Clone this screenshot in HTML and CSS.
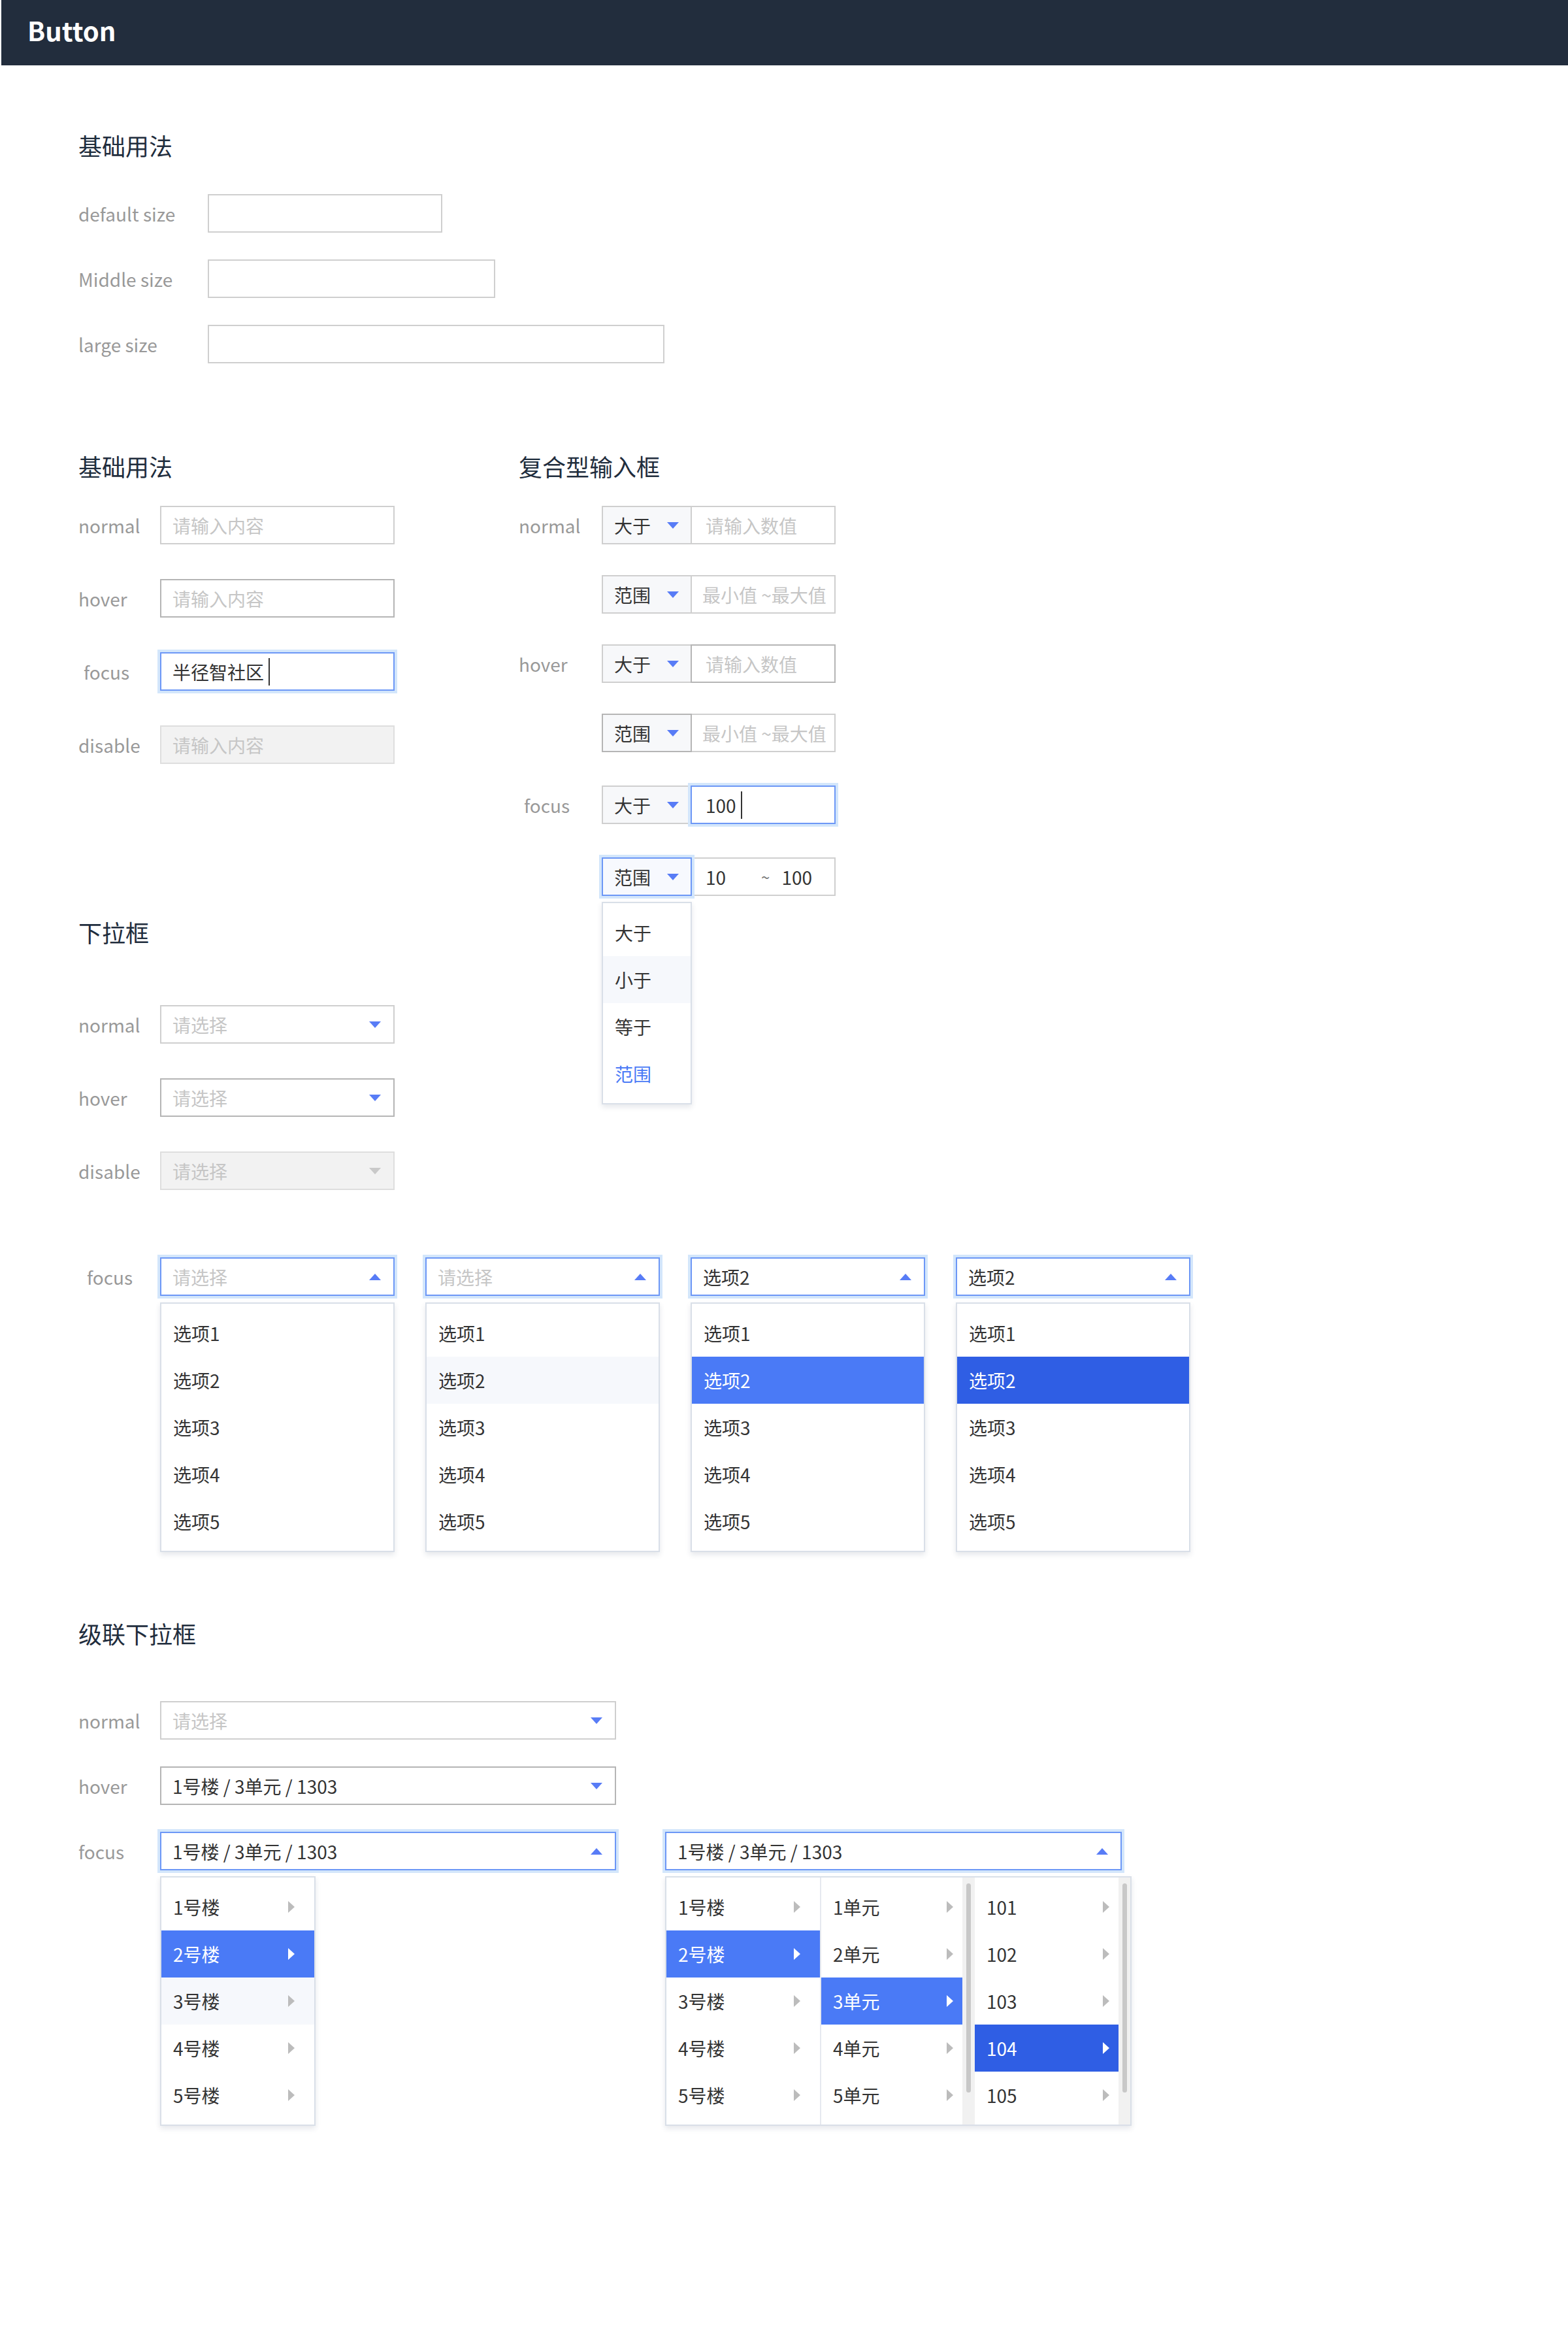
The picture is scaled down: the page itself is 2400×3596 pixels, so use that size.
FILE: index.html
```html
<!DOCTYPE html>
<html lang="zh-CN">
<head>
  <meta charset="UTF-8">
  <meta name="viewport" content="width=device-width, initial-scale=1.0">
  <title>Button</title>
  <link rel="stylesheet" href="styles.css">
</head>
<body>
  <header class="topbar">
    <h1>Button</h1>
  </header>

  <main class="page">
    <!-- input sizes -->
    <section class="sizes">
      <h2 class="block-title">基础用法</h2>
      <div class="stack">
        <div class="form-row">
          <span class="row-label">default size</span>
          <div class="field w-default"></div>
        </div>
        <div class="form-row">
          <span class="row-label">Middle size</span>
          <div class="field w-middle"></div>
        </div>
        <div class="form-row">
          <span class="row-label">large size</span>
          <div class="field w-large"></div>
        </div>
      </div>
    </section>

    <section class="split">
      <div class="split-left">
        <h2 class="block-title">基础用法</h2>
        <div class="stack">
          <div class="form-row">
            <span class="row-label">normal</span>
            <div class="field w-base"><span class="placeholder">请输入内容</span></div>
          </div>
          <div class="form-row">
            <span class="row-label">hover</span>
            <div class="field w-base is-hover"><span class="placeholder">请输入内容</span></div>
          </div>
          <div class="form-row">
            <span class="row-label is-nudged">focus</span>
            <div class="field w-base is-focus">半径智社区<span class="caret"></span></div>
          </div>
          <div class="form-row">
            <span class="row-label">disable</span>
            <div class="field w-base is-disabled"><span class="placeholder">请输入内容</span></div>
          </div>
        </div>
      </div>

      <div class="split-right">
        <h2 class="block-title">复合型输入框</h2>
        <div class="combo-list">
          <div class="combo-group">
            <span class="row-label">normal</span>
            <div class="combo-stack">
              <div class="combo">
                <div class="combo-select">大于<span class="arrow"></span></div>
                <div class="combo-input"><span class="placeholder">请输入数值</span></div>
              </div>
              <div class="combo">
                <div class="combo-select">范围<span class="arrow"></span></div>
                <div class="combo-input is-range"><span class="placeholder">最小值 ~最大值</span></div>
              </div>
            </div>
          </div>

          <div class="combo-group">
            <span class="row-label">hover</span>
            <div class="combo-stack">
              <div class="combo">
                <div class="combo-select">大于<span class="arrow"></span></div>
                <div class="combo-input is-hover"><span class="placeholder">请输入数值</span></div>
              </div>
              <div class="combo">
                <div class="combo-select is-hover">范围<span class="arrow"></span></div>
                <div class="combo-input is-range"><span class="placeholder">最小值 ~最大值</span></div>
              </div>
            </div>
          </div>

          <div class="combo-group group-focus">
            <span class="row-label is-nudged">focus</span>
            <div class="combo-stack">
              <div class="combo">
                <div class="combo-select">大于<span class="arrow"></span></div>
                <div class="combo-input is-focus">100<span class="caret"></span></div>
              </div>
              <div class="combo">
                <div class="combo-select is-focus">范围<span class="arrow"></span>
                  <div class="menu combo-menu">
                    <div class="menu-item">大于</div>
                    <div class="menu-item is-hover">小于</div>
                    <div class="menu-item">等于</div>
                    <div class="menu-item is-chosen">范围</div>
                  </div>
                </div>
                <div class="combo-input"><span>10</span><span class="tilde">~</span><span class="range-max">100</span></div>
              </div>
            </div>
          </div>
        </div>
      </div>
    </section>

    <!-- select -->
    <section class="dropdowns">
      <h2 class="block-title">下拉框</h2>
      <div class="stack">
        <div class="form-row">
          <span class="row-label">normal</span>
          <div class="field w-base"><span class="placeholder">请选择</span><span class="arrow"></span></div>
        </div>
        <div class="form-row">
          <span class="row-label">hover</span>
          <div class="field w-base is-hover"><span class="placeholder">请选择</span><span class="arrow"></span></div>
        </div>
        <div class="form-row">
          <span class="row-label">disable</span>
          <div class="field w-base is-disabled"><span class="placeholder">请选择</span><span class="arrow arrow-muted"></span></div>
        </div>
      </div>

      <div class="form-row row-open">
        <span class="row-label is-nudged">focus</span>
        <div class="select-set">
          <div class="select-group">
            <div class="field w-base is-focus"><span class="placeholder">请选择</span><span class="arrow arrow-up"></span></div>
            <div class="menu">
              <div class="menu-item">选项1</div>
              <div class="menu-item">选项2</div>
              <div class="menu-item">选项3</div>
              <div class="menu-item">选项4</div>
              <div class="menu-item">选项5</div>
            </div>
          </div>
          <div class="select-group">
            <div class="field w-base is-focus"><span class="placeholder">请选择</span><span class="arrow arrow-up"></span></div>
            <div class="menu">
              <div class="menu-item">选项1</div>
              <div class="menu-item is-hover">选项2</div>
              <div class="menu-item">选项3</div>
              <div class="menu-item">选项4</div>
              <div class="menu-item">选项5</div>
            </div>
          </div>
          <div class="select-group">
            <div class="field w-base is-focus">选项2<span class="arrow arrow-up"></span></div>
            <div class="menu">
              <div class="menu-item">选项1</div>
              <div class="menu-item is-active">选项2</div>
              <div class="menu-item">选项3</div>
              <div class="menu-item">选项4</div>
              <div class="menu-item">选项5</div>
            </div>
          </div>
          <div class="select-group">
            <div class="field w-base is-focus">选项2<span class="arrow arrow-up"></span></div>
            <div class="menu">
              <div class="menu-item">选项1</div>
              <div class="menu-item is-pressed">选项2</div>
              <div class="menu-item">选项3</div>
              <div class="menu-item">选项4</div>
              <div class="menu-item">选项5</div>
            </div>
          </div>
        </div>
      </div>
    </section>

    <!-- cascader -->
    <section class="cascades">
      <h2 class="block-title">级联下拉框</h2>
      <div class="stack">
        <div class="form-row">
          <span class="row-label">normal</span>
          <div class="field w-cascade"><span class="placeholder">请选择</span><span class="arrow"></span></div>
        </div>
        <div class="form-row">
          <span class="row-label">hover</span>
          <div class="field w-cascade is-hover">1号楼 / 3单元 / 1303<span class="arrow"></span></div>
        </div>
        <div class="form-row row-top">
          <span class="row-label">focus</span>
          <div class="cascade-set">
            <div class="cascade-group">
              <div class="field w-cascade is-focus">1号楼 / 3单元 / 1303<span class="arrow arrow-up"></span></div>
              <div class="cascade-menu">
                <div class="cascade-col col-first col-solo">
                  <div class="cascade-item">1号楼<span class="arrow-right"></span></div>
                  <div class="cascade-item is-active">2号楼<span class="arrow-right"></span></div>
                  <div class="cascade-item is-hover">3号楼<span class="arrow-right"></span></div>
                  <div class="cascade-item">4号楼<span class="arrow-right"></span></div>
                  <div class="cascade-item">5号楼<span class="arrow-right"></span></div>
                </div>
              </div>
            </div>

            <div class="cascade-group">
              <div class="field w-cascade-wide is-focus">1号楼 / 3单元 / 1303<span class="arrow arrow-up"></span></div>
              <div class="cascade-menu">
                <div class="cascade-col col-first">
                  <div class="cascade-item">1号楼<span class="arrow-right"></span></div>
                  <div class="cascade-item is-active">2号楼<span class="arrow-right"></span></div>
                  <div class="cascade-item">3号楼<span class="arrow-right"></span></div>
                  <div class="cascade-item">4号楼<span class="arrow-right"></span></div>
                  <div class="cascade-item">5号楼<span class="arrow-right"></span></div>
                </div>
                <div class="cascade-col col-unit">
                  <div class="cascade-item">1单元<span class="arrow-right"></span></div>
                  <div class="cascade-item">2单元<span class="arrow-right"></span></div>
                  <div class="cascade-item is-active">3单元<span class="arrow-right"></span></div>
                  <div class="cascade-item">4单元<span class="arrow-right"></span></div>
                  <div class="cascade-item">5单元<span class="arrow-right"></span></div>
                </div>
                <div class="scrollbar"><span class="thumb"></span></div>
                <div class="cascade-col col-room">
                  <div class="cascade-item">101<span class="arrow-right"></span></div>
                  <div class="cascade-item">102<span class="arrow-right"></span></div>
                  <div class="cascade-item">103<span class="arrow-right"></span></div>
                  <div class="cascade-item is-pressed">104<span class="arrow-right"></span></div>
                  <div class="cascade-item">105<span class="arrow-right"></span></div>
                </div>
                <div class="scrollbar scrollbar-end"><span class="thumb"></span></div>
              </div>
            </div>
          </div>
        </div>
      </div>
    </section>
  </main>
</body>
</html>
```

FILE: styles.css
```css
* {
  box-sizing: border-box;
}

body {
  margin: 0;
  background: #fff;
  font-family: "Noto Sans CJK SC", "Noto Sans", sans-serif;
  color: #333;
}

.topbar {
  height: 100px;
  margin-left: 2px;
  padding-left: 40px;
  background: #222d3d;
}

.topbar h1 {
  margin: 0;
  font-size: 40px;
  line-height: 92px;
  font-weight: 700;
  color: #fff;
}

.page {
  padding: 0 0 300px 120px;
}

.block-title {
  margin: 0;
  font-size: 36px;
  line-height: 48px;
  font-weight: 400;
  color: #1f2d3d;
}

.stack {
  display: flex;
  flex-direction: column;
}

.form-row {
  display: flex;
  align-items: center;
}

.row-label {
  flex: none;
  width: 125px;
  height: 59px;
  display: flex;
  align-items: center;
  font-size: 28px;
  color: #999;
}

.row-label.is-nudged {
  padding-left: 8px;
}

/* fields */
.field {
  flex: none;
  height: 59px;
  display: flex;
  align-items: center;
  padding: 0 19px 0 17px;
  border: 2px solid #cfcfcf;
  background: #fff;
  font-size: 28px;
  color: #333;
  white-space: nowrap;
}

.field.is-hover {
  border-color: #b5b5b5;
}

.field.is-focus {
  border-color: #6c97f6;
  box-shadow: 0 0 0 4px #d3e6fb;
}

.field.is-disabled {
  background: #f2f2f2;
  border-color: #dedede;
}

.placeholder {
  color: #c6c6c6;
}

.caret {
  display: inline-block;
  width: 2px;
  height: 42px;
  margin-left: 7px;
  background: #333;
}

.w-default { width: 359px; }
.w-middle { width: 440px; }
.w-large { width: 699px; }
.w-base { width: 359px; }
.w-cascade { width: 698px; }
.w-cascade-wide { width: 699px; }

.arrow {
  margin-left: auto;
  width: 0;
  height: 0;
  border-left: 9px solid transparent;
  border-right: 9px solid transparent;
  border-top: 10px solid #587cf6;
}

.arrow-up {
  border-top: 0;
  border-bottom: 10px solid #587cf6;
}

.arrow-muted {
  border-top-color: #c9c9c9;
}

.arrow-right {
  flex: none;
  width: 0;
  height: 0;
  border-top: 9px solid transparent;
  border-bottom: 9px solid transparent;
  border-left: 10px solid #bcbcbc;
}

/* sizes */
.sizes {
  padding-top: 98px;
}

.sizes .stack {
  margin-top: 51px;
  gap: 41px;
}

.sizes .row-label {
  width: 198px;
}

/* two columns */
.split {
  display: flex;
  margin-top: 133px;
}

.split-left {
  width: 674px;
  flex: none;
}

.split-left .stack {
  margin-top: 37px;
  gap: 53px;
}

.combo-list {
  margin-top: 37px;
  display: flex;
  flex-direction: column;
  gap: 47px;
}

.combo-group {
  display: flex;
  align-items: flex-start;
}

.combo-group .row-label {
  width: 127px;
}

.combo-stack {
  display: flex;
  flex-direction: column;
  gap: 47px;
}

.group-focus {
  margin-top: 4px;
}

.group-focus .combo-stack {
  gap: 51px;
}

.combo {
  display: flex;
  font-size: 28px;
}

.combo-select {
  position: relative;
  width: 138px;
  height: 59px;
  display: flex;
  align-items: center;
  padding: 0 18px 0 17px;
  border: 2px solid #cfcfcf;
  background: #f7f8fa;
  color: #333;
}

.combo-input {
  width: 222px;
  height: 59px;
  margin-left: -2px;
  display: flex;
  align-items: center;
  padding: 0 10px 0 21px;
  border: 2px solid #cfcfcf;
  background: #fff;
  color: #333;
  white-space: nowrap;
  overflow: hidden;
}

.combo-input.is-range {
  padding-left: 16px;
}

.combo-select.is-hover,
.combo-input.is-hover {
  border-color: #b5b5b5;
  position: relative;
}

.combo-select.is-focus,
.combo-input.is-focus {
  position: relative;
  z-index: 1;
  border-color: #6c97f6;
  box-shadow: 0 0 0 4px #d3e6fb;
}

.combo-select.is-focus {
  background: #f7f9fe;
}

.tilde {
  margin-left: 54px;
  font-size: 24px;
  color: #777;
}

.range-max {
  margin-left: 18px;
}

/* menus */
.menu {
  padding: 9px 0;
  border: 2px solid #d9dfe8;
  background: #fff;
  box-shadow: 0 4px 8px rgba(40, 60, 90, 0.12);
}

.menu-item {
  height: 72px;
  display: flex;
  align-items: center;
  padding: 0 18px;
  font-size: 28px;
  color: #333;
}

.menu-item.is-hover {
  background: #f6f8fc;
}

.menu-item.is-active {
  background: #4a7af6;
  color: #fff;
}

.menu-item.is-pressed {
  background: #2f5ee4;
  color: #fff;
}

.menu-item.is-chosen {
  color: #4a7af6;
}

.combo-menu {
  position: absolute;
  top: 66px;
  left: -2px;
  width: 138px;
  z-index: 2;
}

/* select */
.dropdowns {
  margin-top: 31px;
}

.dropdowns .stack {
  margin-top: 88px;
  gap: 53px;
}

.row-open {
  align-items: flex-start;
  margin-top: 103px;
}

.dropdowns .row-label.is-nudged {
  padding-left: 13px;
}

.select-set {
  display: flex;
  gap: 47px;
}

.select-group {
  display: flex;
  flex-direction: column;
}

.select-group .menu {
  margin-top: 10px;
  width: 359px;
}

/* cascader */
.cascades {
  margin-top: 100px;
}

.cascades .stack {
  margin-top: 80px;
  gap: 41px;
}

.row-top {
  align-items: flex-start;
}

.cascade-set {
  display: flex;
  gap: 75px;
}

.cascade-group {
  display: flex;
  flex-direction: column;
  align-items: flex-start;
}

.cascade-menu {
  display: flex;
  margin-top: 9px;
  border: 2px solid #d9dfe8;
  background: #fff;
  box-shadow: 0 4px 8px rgba(40, 60, 90, 0.12);
}

.cascade-col {
  padding: 9px 0;
}

.col-first {
  width: 237px;
  border-right: 2px solid #e6e9ef;
}

.col-solo {
  width: 234px;
  border-right: 0;
}

.col-unit {
  width: 216px;
}

.col-room {
  width: 220px;
}

.cascade-item {
  height: 72px;
  display: flex;
  align-items: center;
  justify-content: space-between;
  padding: 0 14px 0 18px;
  font-size: 28px;
  color: #333;
}

.col-first .cascade-item {
  padding-right: 30px;
}

.cascade-item.is-hover {
  background: #f6f8fc;
}

.cascade-item.is-active {
  background: #4a7af6;
  color: #fff;
}

.cascade-item.is-pressed {
  background: #2f5ee4;
  color: #fff;
}

.cascade-item.is-active .arrow-right,
.cascade-item.is-pressed .arrow-right {
  border-left-color: #fff;
}

.scrollbar {
  width: 19px;
  display: flex;
  justify-content: center;
  padding-top: 9px;
  background: #f1f1f1;
}

.scrollbar-end {
  width: 18px;
}

.thumb {
  width: 7px;
  height: 320px;
  border-radius: 4px;
  background: #c8c8c8;
}
```
